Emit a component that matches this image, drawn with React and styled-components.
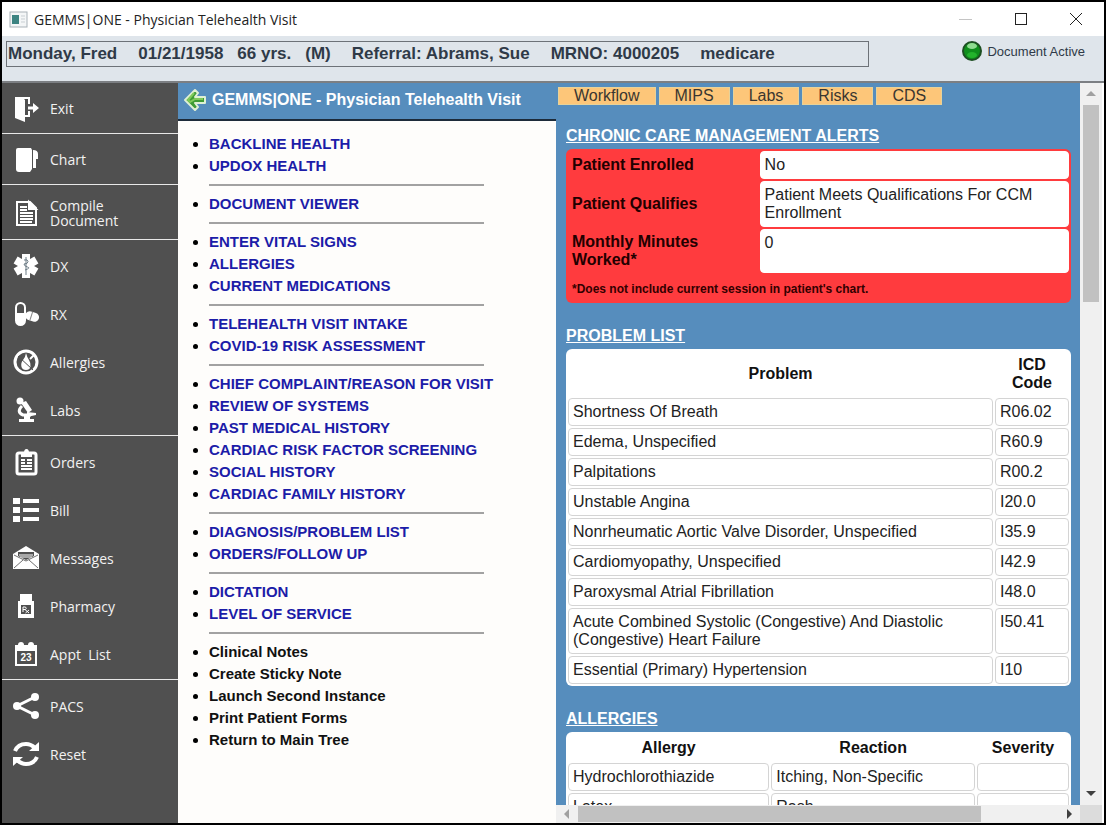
import { Fragment } from "react";
import styled, { createGlobalStyle } from "styled-components";

const GlobalStyle = createGlobalStyle`
  * {
    box-sizing: border-box;
  }
  body {
    margin: 0;
    font-family: "Liberation Sans", Arial, sans-serif;
    font-size: 16px;
  }
  button {
    font: inherit;
    border: none;
    padding: 0;
    background: none;
    cursor: pointer;
  }
`;

const Window = styled.div`
  height: 100vh;
  display: flex;
  flex-direction: column;
  border: 2px solid #000;
  background: #fff;
  overflow: hidden;
`;

const TitleBar = styled.header`
  flex: none;
  height: 34px;
  display: flex;
  align-items: center;
  gap: 6px;
  padding: 0 21px 0 7px;
  font-family: "Open Sans", "Noto Sans", sans-serif;
  color: #222;
`;

const WindowTitle = styled.h1`
  margin: 0;
  flex: 1;
  font-size: 14px;
  font-weight: 400;
`;

const WindowControls = styled.div`
  display: flex;
  gap: 41px;

  button {
    display: flex;
  }
`;

const PatientBar = styled.div`
  flex: none;
  height: 47px;
  display: flex;
  align-items: flex-start;
  justify-content: space-between;
  padding: 5px 19px 0 4px;
  background: #dfe5eb;
  border-bottom: 2px solid #7c7f83;
`;

const PatientInfo = styled.div`
  flex: 0 1 863px;
  height: 26px;
  display: flex;
  align-items: center;
  gap: 21px;
  padding: 0 1px;
  border: 1px solid #6d7278;
  font-size: 17px;
  line-height: 24px;
  font-weight: 700;
  color: #2f3a48;
  white-space: nowrap;
`;

const PatientVitals = styled.span`
  display: flex;
  gap: 14px;
`;

const DocStatus = styled.div`
  display: flex;
  align-items: center;
  gap: 5px;
  font-size: 13px;
  color: #2f3a48;
`;

const Body = styled.div`
  flex: 1;
  min-height: 0;
  display: flex;
`;

const Sidebar = styled.nav`
  flex: 0 0 176px;
  background: #505050;
`;

const NavGroup = styled.div`
  padding: 2px 0 1px;
  border-bottom: 1px solid ${(props) => (props.$last ? "transparent" : "#e8e8e8")};

  button {
    height: ${(props) => props.$row}px;
  }
`;

const NavButton = styled.button`
  width: 100%;
  display: flex;
  align-items: center;
  gap: 10px;
  padding-left: 10px;
  font-family: "Open Sans", "Noto Sans", sans-serif;
  font-size: 14px;
  line-height: 15px;
  color: #f2f2f2;
  text-align: left;
  white-space: pre-wrap;

  svg {
    flex: none;
    width: 28px;
    height: 28px;
  }
`;

const TreePanel = styled.section`
  flex: 0 1 378px;
  min-width: 0;
  background: #fefdfb;
`;

const TreeHeader = styled.div`
  height: 38px;
  display: flex;
  align-items: center;
  gap: 6px;
  padding: 0 6px 3px;
  background: #568dbd;
  border-bottom: 2px solid #1d2b3a;
`;

const TreeTitle = styled.h2`
  margin: 0;
  font-size: 16px;
  font-weight: 700;
  color: #fff;
  white-space: nowrap;
`;

const TreeBody = styled.div`
  padding: 12px 72px 0 31px;
`;

const TreeList = styled.ul`
  margin: 0;
  padding: 0;
  font-size: 15px;
  font-weight: 700;
  line-height: 22px;
  white-space: nowrap;

  li::marker {
    color: #000;
  }
`;

const TreeLink = styled.a`
  color: ${(props) => (props.$plain ? "#111" : "#1c1ca8")};
  text-decoration: none;
`;

const Divider = styled.hr`
  height: 2px;
  margin: 7px 0;
  border: none;
  background: #a2a2a2;
`;

const AlertPanel = styled.section`
  flex: 1;
  min-width: 0;
  display: grid;
  grid-template-columns: minmax(0, 1fr) 22px;
  grid-template-rows: minmax(0, 1fr) 18px;
  background: #568dbd;
  border-right: 2px solid #fff;
`;

const AlertContent = styled.div`
  overflow: hidden;
  padding: 4px 9px 0 2px;
`;

const Tabs = styled.div`
  display: flex;
  gap: 3px;
`;

const Tab = styled.button`
  height: 18px;
  padding: 0 15px;
  background: #fdc679;
  border: 1px solid #e6d29a;
  line-height: 16px;
  color: #3a3630;
`;

const Section = styled.div`
  padding: 0 0 24px 8px;

  ${Tabs} + & {
    padding-top: 22px;
  }
`;

const SectionTitle = styled.h3`
  margin: 0 0 4px;
  font-size: 16px;
  line-height: 18px;
  font-weight: 700;
  color: #fff;
  text-decoration: underline;
`;

const DataTable = styled.table`
  width: 100%;
  table-layout: fixed;
  border-collapse: separate;
  border-spacing: 2px;
  background: #fff;
  border-radius: 6px;
  line-height: 18px;
  color: #222;

  td {
    padding: 4px;
    vertical-align: top;
    background: #fff;
    border: 1px solid #d4d4d4;
    border-radius: 4px;
  }

  thead th {
    padding: 5px 4px 4px;
    color: #111;
  }
`;

const AlertBox = styled.div`
  background: #ff3b3e;
  border-radius: 6px;
`;

const AlertTable = styled(DataTable)`
  background: none;

  td {
    border-color: #fff;
  }

  th {
    padding: 4px;
    text-align: left;
    color: #200;
  }
`;

const Footnote = styled.p`
  margin: 0;
  padding: 6px;
  font-size: 12px;
  line-height: 16px;
  font-weight: 700;
  color: #300;
`;

const ScrollBar = styled.div`
  display: flex;
  flex-direction: ${(props) => (props.$vertical ? "column" : "row")};
  background: #f0f0f0;

  button {
    flex: 0 0 22px;
    display: flex;
    align-items: center;
    justify-content: center;
  }
`;

const Track = styled.div`
  flex: 1;
  display: flex;
  flex-direction: inherit;
  padding: ${(props) => (props.$vertical ? "0 3px" : "1px 0")};
`;

const Thumb = styled.div`
  flex: 0 0 ${(props) => props.$size}%;
  background: #c1c1c1;
`;

const Corner = styled.div`
  background: #dcdcdc;
`;

const ExitIcon = () => (
  <svg viewBox="0 0 28 28" fill="#fff">
    <path d="M3 2h15v7h-2V4h-4l1 1v15h3v-4h2v6h-5v5L3 23z" />
    <path d="M16 11.500h5V8l6 5-6 5v-3.500h-5z" />
  </svg>
);

const ChartIcon = () => (
  <svg viewBox="0 0 28 28" fill="#fff">
    <path d="M4 4q0-2 2-2h13l1 2v19l-2 3H7q-3 0-3-3z" />
    <path d="M21 4q5 0 5 4v5h-2v9h-3z" />
  </svg>
);

const DocumentIcon = () => (
  <svg viewBox="0 0 28 28" fill="none" stroke="#fff" strokeWidth="2">
    <path d="M5 3h13l6 6v17H5z" />
    <path d="M17 3v7h7z" fill="#fff" />
    <path d="M8 8h7M8 11h7M8 14h13M8 17h13M8 20h13M8 23h12" />
  </svg>
);

const StarOfLifeIcon = () => (
  <svg viewBox="0 0 28 28">
    <g fill="#fff">
      <rect x="10" y="2" width="8" height="24" />
      <rect x="10" y="2" width="8" height="24" transform="rotate(60 14 14)" />
      <rect x="10" y="2" width="8" height="24" transform="rotate(-60 14 14)" />
    </g>
    <path
      d="M14 5v18M12 8q4-1 4 1.500t-4 2.500q0 2 3.500 3t-2.500 3"
      fill="none"
      stroke="#6c7c86"
    />
  </svg>
);

const PillsIcon = () => (
  <svg viewBox="0 0 28 28">
    <rect x="4" y="3" width="9" height="22" rx="4.500" fill="none" stroke="#fff" strokeWidth="2" />
    <path d="M4 13h9v8a4.500 4 0 0 1-9 0z" fill="#fff" />
    <g transform="rotate(18 20 17)">
      <rect x="13" y="12" width="14" height="9" rx="4.500" fill="#fff" />
      <path d="M19 12v9" stroke="#888" />
    </g>
  </svg>
);

const AllergyIcon = () => (
  <svg viewBox="0 0 28 28">
    <circle cx="14" cy="14" r="11" fill="none" stroke="#fff" strokeWidth="3" />
    <path d="M14 5q1 4 3 7t1.500 7q-1 3-4.500 3t-4.500-3q-1-4 1.500-7t3-7z" fill="#fff" />
    <path d="M6 8l15 14" stroke="#505050" />
    <path d="M22 7l-4 4" stroke="#fff" strokeWidth="2" />
  </svg>
);

const MicroscopeIcon = () => (
  <svg viewBox="0 0 28 28" fill="#fff">
    <circle cx="8" cy="5" r="3.500" />
    <path d="M9 7l5-2 6 9-4 3z" />
    <path d="M10 10q-6 6 1 9h8" fill="none" stroke="#fff" strokeWidth="3" />
    <path d="M15 16l9 1v2l-9 2zM12 20h6v3h4v3H7v-3h5z" />
  </svg>
);

const ClipboardIcon = () => (
  <svg viewBox="0 0 28 28">
    <rect x="5" y="5" width="19" height="21" rx="2" fill="none" stroke="#fff" strokeWidth="3" />
    <path d="M9 9V5h3q0-4 2.500-4T17 5h3v4z" fill="#fff" />
    <path d="M9 12h4M15 12h5M9 15h4M15 15h5M9 18h11M9 21h11" stroke="#fff" strokeWidth="2" />
  </svg>
);

const BillIcon = () => (
  <svg viewBox="0 0 28 28" fill="#fff">
    <path d="M1 2h7v6H1zM1 11h7v6H1zM1 20h7v6H1zM11 3h16v4H11zM11 12h16v4H11zM11 21h16v4H11z" />
  </svg>
);

const MessageIcon = () => (
  <svg viewBox="0 0 28 28">
    <path d="M1 10L14 2l13 8v15H1z" fill="#fff" />
    <path d="M6 8h16v4l-8 4-8-4z" fill="#505050" />
    <path d="M7 11h14M8 13h12" stroke="#fff" />
    <path d="M2 24l9-8M26 24l-9-8M2 11l12 6 12-6" fill="none" stroke="#707070" />
  </svg>
);

const PharmacyIcon = () => (
  <svg viewBox="0 0 28 28">
    <path d="M8 2h12v8H8zM6 9h16v17H6z" fill="#fff" />
    <rect x="9" y="13" width="10" height="9" fill="#505050" />
    <path d="M11 20v-5h2.500q1.500 1.500 0 2.500H11M13 17.500l4 3.500M17 18l-3.500 3" fill="none" stroke="#fff" />
  </svg>
);

const CalendarText = styled.text`
  font: 700 10px "Liberation Sans", Arial, sans-serif;
`;

const CalendarIcon = () => (
  <svg viewBox="0 0 28 28" fill="#fff">
    <path d="M3 5h22v21H3zM5 11v13h18V11z" fillRule="evenodd" />
    <circle cx="9" cy="5" r="3" />
    <circle cx="19" cy="5" r="3" />
    <CalendarText x="14" y="21" textAnchor="middle">
      23
    </CalendarText>
  </svg>
);

const ShareIcon = () => (
  <svg viewBox="0 0 28 28" fill="#fff">
    <circle cx="5" cy="14" r="4" />
    <circle cx="23" cy="5" r="4" />
    <circle cx="23" cy="23" r="4" />
    <path d="M23 5L5 14l18 9" fill="none" stroke="#fff" strokeWidth="3" />
  </svg>
);

const ResetIcon = () => (
  <svg viewBox="0 0 28 28">
    <path d="M3 11q3-7 11-7 5 0 9 4M25 17q-3 7-11 7-5 0-9-4" fill="none" stroke="#fff" strokeWidth="4" />
    <path d="M27 2v9H17zM1 26v-9h10z" fill="#fff" />
  </svg>
);

const AppIcon = () => (
  <svg width="19" height="17" viewBox="0 0 19 17">
    <rect x="1" y="1" width="17" height="15" fill="#f4f6f7" stroke="#a9b2b8" />
    <rect x="3" y="4" width="7" height="9" fill="#3d8482" />
    <path d="M12 5h4M12 8h4M12 11h4" stroke="#c9cfd3" />
  </svg>
);

const BackIcon = () => (
  <svg width="22" height="22" viewBox="0 0 22 22">
    <path
      d="M11 1L1 11l10 10 3-3-3-4h10V8H11l3-4z"
      fill="#3f9b35"
      stroke="#dff0d4"
      strokeWidth="2"
      strokeLinejoin="round"
    />
    <path d="M10 4l-6 7 2 2 5-3h8" fill="none" stroke="#7fca5a" strokeWidth="2" />
  </svg>
);

const StatusLight = () => (
  <svg width="20" height="20" viewBox="0 0 20 20">
    <circle cx="10" cy="10" r="9" fill="#0f8f1c" stroke="#1d4f22" strokeWidth="2" />
    <ellipse cx="10" cy="5" rx="5" ry="3" fill="#8fdc90" />
    <ellipse cx="10" cy="14" rx="5" ry="3" fill="#23b32c" />
  </svg>
);

const arrows = {
  up: "M0 7l5-5 5 5z",
  down: "M0 2l5 5 5-5z",
  left: "M7 0L2 5l5 5z",
  right: "M3 0l5 5-5 5z",
};

const Arrow = ({ dir, color }) => (
  <svg width="10" height="10" viewBox="0 0 10 10">
    <path d={arrows[dir]} fill={color} />
  </svg>
);

const navGroups = [
  { row: 47, items: [["Exit", ExitIcon]] },
  { row: 47, items: [["Chart", ChartIcon]] },
  { row: 51, items: [["Compile\nDocument", DocumentIcon]] },
  {
    row: 48,
    items: [
      ["DX", StarOfLifeIcon],
      ["RX", PillsIcon],
      ["Allergies", AllergyIcon],
      ["Labs", MicroscopeIcon],
    ],
  },
  {
    row: 48,
    items: [
      ["Orders", ClipboardIcon],
      ["Bill", BillIcon],
      ["Messages", MessageIcon],
      ["Pharmacy", PharmacyIcon],
      ["Appt  List", CalendarIcon],
    ],
  },
  {
    row: 48,
    items: [
      ["PACS", ShareIcon],
      ["Reset", ResetIcon],
    ],
  },
];

const treeGroups = [
  ["BACKLINE HEALTH", "UPDOX HEALTH"],
  ["DOCUMENT VIEWER"],
  ["ENTER VITAL SIGNS", "ALLERGIES", "CURRENT MEDICATIONS"],
  ["TELEHEALTH VISIT INTAKE", "COVID-19 RISK ASSESSMENT"],
  [
    "CHIEF COMPLAINT/REASON FOR VISIT",
    "REVIEW OF SYSTEMS",
    "PAST MEDICAL HISTORY",
    "CARDIAC RISK FACTOR SCREENING",
    "SOCIAL HISTORY",
    "CARDIAC FAMILY HISTORY",
  ],
  ["DIAGNOSIS/PROBLEM LIST", "ORDERS/FOLLOW UP"],
  ["DICTATION", "LEVEL OF SERVICE"],
];

const treeTools = [
  "Clinical Notes",
  "Create Sticky Note",
  "Launch Second Instance",
  "Print Patient Forms",
  "Return to Main Tree",
];

const problems = [
  ["Shortness Of Breath", "R06.02"],
  ["Edema, Unspecified", "R60.9"],
  ["Palpitations", "R00.2"],
  ["Unstable Angina", "I20.0"],
  ["Nonrheumatic Aortic Valve Disorder, Unspecified", "I35.9"],
  ["Cardiomyopathy, Unspecified", "I42.9"],
  ["Paroxysmal Atrial Fibrillation", "I48.0"],
  ["Acute Combined Systolic (Congestive) And Diastolic (Congestive) Heart Failure", "I50.41"],
  ["Essential (Primary) Hypertension", "I10"],
];

const allergies = [
  ["Hydrochlorothiazide", "Itching, Non-Specific", ""],
  ["Latex", "Rash", ""],
];

const TreeItems = ({ items, plain }) => (
  <TreeList>
    {items.map((label) => (
      <li key={label}>
        <TreeLink href="#" $plain={plain}>
          {label}
        </TreeLink>
      </li>
    ))}
  </TreeList>
);

export default function App() {
  return (
    <Window>
      <GlobalStyle />
      <TitleBar>
        <AppIcon />
        <WindowTitle>GEMMS|ONE - Physician Telehealth Visit</WindowTitle>
        <WindowControls>
          <button aria-label="Minimize">
            <svg width="14" height="14" stroke="#c4c4c4">
              <path d="M0 7.500h13" />
            </svg>
          </button>
          <button aria-label="Maximize">
            <svg width="14" height="14" fill="none" stroke="#222">
              <rect x="1.500" y="1.500" width="11" height="11" />
            </svg>
          </button>
          <button aria-label="Close">
            <svg width="14" height="14" stroke="#222">
              <path d="M1 1l12 12M13 1L1 13" />
            </svg>
          </button>
        </WindowControls>
      </TitleBar>

      <PatientBar>
        <PatientInfo>
          <span>Monday, Fred</span>
          <PatientVitals>
            <span>01/21/1958</span>
            <span>66 yrs.</span>
            <span>(M)</span>
          </PatientVitals>
          <span>Referral: Abrams, Sue</span>
          <span>MRNO: 4000205</span>
          <span>medicare</span>
        </PatientInfo>
        <DocStatus>
          <StatusLight />
          Document Active
        </DocStatus>
      </PatientBar>

      <Body>
        <Sidebar>
          {navGroups.map((group, i) => (
            <NavGroup key={i} $row={group.row} $last={i === navGroups.length - 1}>
              {group.items.map(([label, Icon]) => (
                <NavButton key={label}>
                  <Icon />
                  {label}
                </NavButton>
              ))}
            </NavGroup>
          ))}
        </Sidebar>

        <TreePanel>
          <TreeHeader>
            <BackIcon />
            <TreeTitle>GEMMS|ONE - Physician Telehealth Visit</TreeTitle>
          </TreeHeader>
          <TreeBody>
            {treeGroups.map((group) => (
              <Fragment key={group[0]}>
                <TreeItems items={group} />
                <Divider />
              </Fragment>
            ))}
            <TreeItems items={treeTools} plain />
          </TreeBody>
        </TreePanel>

        <AlertPanel>
          <AlertContent>
            <Tabs>
              {["Workflow", "MIPS", "Labs", "Risks", "CDS"].map((tab) => (
                <Tab key={tab}>{tab}</Tab>
              ))}
            </Tabs>

            <Section>
              <SectionTitle>CHRONIC CARE MANAGEMENT ALERTS</SectionTitle>
              <AlertBox>
                <AlertTable>
                  <colgroup>
                    <col width="38%" />
                    <col />
                  </colgroup>
                  <tbody>
                    <tr>
                      <th>Patient Enrolled</th>
                      <td>No</td>
                    </tr>
                    <tr>
                      <th>Patient Qualifies</th>
                      <td>Patient Meets Qualifications For CCM Enrollment</td>
                    </tr>
                    <tr>
                      <th>Monthly Minutes Worked*</th>
                      <td>0</td>
                    </tr>
                  </tbody>
                </AlertTable>
                <Footnote>*Does not include current session in patient's chart.</Footnote>
              </AlertBox>
            </Section>

            <Section>
              <SectionTitle>PROBLEM LIST</SectionTitle>
              <DataTable>
                <colgroup>
                  <col />
                  <col width="74" />
                </colgroup>
                <thead>
                  <tr>
                    <th>Problem</th>
                    <th>ICD Code</th>
                  </tr>
                </thead>
                <tbody>
                  {problems.map(([name, code]) => (
                    <tr key={code}>
                      <td>{name}</td>
                      <td>{code}</td>
                    </tr>
                  ))}
                </tbody>
              </DataTable>
            </Section>

            <Section>
              <SectionTitle>ALLERGIES</SectionTitle>
              <DataTable>
                <colgroup>
                  <col />
                  <col width="41%" />
                  <col width="92" />
                </colgroup>
                <thead>
                  <tr>
                    <th>Allergy</th>
                    <th>Reaction</th>
                    <th>Severity</th>
                  </tr>
                </thead>
                <tbody>
                  {allergies.map(([allergy, reaction, severity]) => (
                    <tr key={allergy}>
                      <td>{allergy}</td>
                      <td>{reaction}</td>
                      <td>{severity}</td>
                    </tr>
                  ))}
                </tbody>
              </DataTable>
            </Section>
          </AlertContent>

          <ScrollBar $vertical>
            <button aria-label="Scroll up">
              <Arrow dir="up" color="#a0a0a0" />
            </button>
            <Track $vertical>
              <Thumb $size={29} />
            </Track>
            <button aria-label="Scroll down">
              <Arrow dir="down" color="#404040" />
            </button>
          </ScrollBar>

          <ScrollBar>
            <button aria-label="Scroll left">
              <Arrow dir="left" color="#a0a0a0" />
            </button>
            <Track>
              <Thumb $size={84} />
            </Track>
            <button aria-label="Scroll right">
              <Arrow dir="right" color="#404040" />
            </button>
          </ScrollBar>
          <Corner />
        </AlertPanel>
      </Body>
    </Window>
  );
}
